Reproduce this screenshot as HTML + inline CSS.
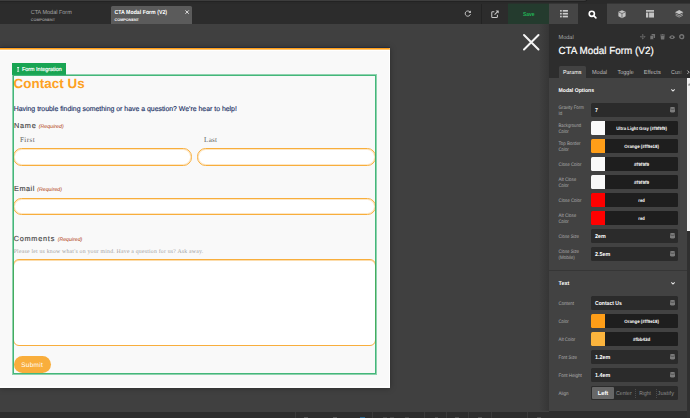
<!DOCTYPE html>
<html><head><meta charset="utf-8"><title>CTA Modal Form (V2)</title>
<style>
*{box-sizing:border-box;margin:0;padding:0}
html,body{width:690px;height:418px;overflow:hidden;background:#404040;font-family:"Liberation Sans",sans-serif}
.a{position:absolute}
.t{position:absolute;white-space:nowrap;line-height:1;transform-origin:0 0}
svg{position:absolute;overflow:visible}
#topstrip{left:0;top:0;width:690px;height:4px;background:#2a2a2a}
#topstrip i{position:absolute;left:0;top:-2px;width:587px;height:3px;background:#3d3d3d;border-radius:0 0 3px 0;box-shadow:0 0 0 .6px #1c1c1c}
#bar{left:0;top:3.5px;width:549px;height:20.5px;background:#2c2c2c}
#tabact{left:111.3px;top:6px;width:80.7px;height:18px;background:#5b5b5b;border-radius:1.5px 1.5px 0 0}
#save{left:508px;top:3.5px;width:41px;height:20.5px;background:#243b2e}
.ptab{top:3.5px;height:20.5px;width:28.7px;background:#454545}
#panel{left:549px;top:24px;width:141px;height:394px;background:#2d2d2d}
#pcont{left:549px;top:78px;width:137.5px;height:333px;background:#424242}
#shade{left:539px;top:24px;width:10px;height:387px;background:linear-gradient(to right,rgba(0,0,0,0),rgba(0,0,0,.16))}
.inp{position:absolute;left:591px;width:87px;height:14px;background:#2b2b2b;border-radius:1.5px;overflow:hidden}
.sw{position:absolute;left:0;top:0;width:14px;height:100%}
.cv{position:absolute;left:14px;right:0;top:0;height:100%;background:#1e1e1e}
.db{position:absolute;left:669.7px;width:5px;height:5.6px}
#modal{left:0;top:48px;width:390px;height:340px;background:#f9f9f9;border-top:2px solid #ff9e18;border-right:1px solid #fff;border-bottom:2px solid #fdfdfd;box-shadow:0 0 6px rgba(0,0,0,.35)}
.fld{position:absolute;left:13.4px;height:18px;background:#fff;border:1px solid #f8ae3c;box-shadow:inset 0 0 0 1px rgba(247,170,51,.28);border-radius:8.6px}
#bot{left:0;top:412px;width:549px;height:6px;background:#2d2d2d}
#bot i{position:absolute;top:0;width:1px;height:7px;background:#3b3b3b}
</style></head><body>
<div class="a" id="topstrip"><i></i></div>
<div class="a" id="bar"></div>
<div class="a" id="tabact"></div>
<svg style="left:184.5px;top:9.9px" width="4.2" height="4.2" viewBox="0 0 10 10"><path d="M1 1L9 9M9 1L1 9" stroke="#fff" stroke-width="1.9" fill="none"/></svg>
<div class="a" style="left:481px;top:3.5px;width:1px;height:20.5px;background:#232323"></div>
<svg style="left:464.4px;top:9.900px" width="7.600" height="7.600" viewBox="0 0 16 16"><path d="M12.600 4.200A5.600 5.600 0 1 0 13.600 8.600" stroke="#c9c9c9" stroke-width="1.900" fill="none"/><path d="M9.400 5.900L14.600 6.200L14.400 1z" fill="#c9c9c9"/></svg>
<svg style="left:491px;top:9.600px" width="8.200" height="8.200" viewBox="0 0 16 16"><path d="M12.500 9.500V13a1.500 1.500 0 0 1-1.500 1.500H3A1.500 1.500 0 0 1 1.500 13V5A1.500 1.500 0 0 1 3 3.500H6.500" stroke="#c9c9c9" stroke-width="2" fill="none"/><path d="M7 9L13.500 2.500" stroke="#c9c9c9" stroke-width="2" fill="none"/><path d="M9 1H15V7z" fill="#c9c9c9"/></svg>
<div class="a" id="save"></div>
<div class="a ptab" style="left:549px;width:29.200px"></div>
<div class="a ptab" style="left:606.900px;width:84px"></div>
<div class="a" style="left:508px;top:3px;width:41px;height:1px;background:#28312c"></div><div class="a" style="left:549px;top:3px;width:29px;height:1px;background:#353535"></div><div class="a" style="left:607px;top:3px;width:83px;height:1px;background:#353535"></div>
<div class="a" id="panel"></div>
<div class="a" style="left:578.200px;top:3.500px;width:28.700px;height:21px;background:#2d2d2d"></div>
<div class="a" id="shade"></div>
<div class="a" id="pcont"></div>
<svg style="left:560.200px;top:10.400px" width="8" height="7.400" viewBox="0 0 16 15"><g fill="#cdcdcd"><rect x="0" y="0" width="3.400" height="3.400"/><rect x="5.400" y="0" width="10.600" height="3.400"/><rect x="0" y="5.800" width="3.400" height="3.400"/><rect x="5.400" y="5.800" width="10.600" height="3.400"/><rect x="0" y="11.600" width="3.400" height="3.400"/><rect x="5.400" y="11.600" width="10.600" height="3.400"/></g></svg>
<svg style="left:588.300px;top:9.700px" width="9" height="9" viewBox="0 0 18 18"><circle cx="7.600" cy="7.600" r="5.200" stroke="#fff" stroke-width="3.200" fill="none"/><path d="M11.800 11.800L15.800 15.800" stroke="#fff" stroke-width="3.200" stroke-linecap="round"/></svg>
<svg style="left:617.600px;top:9.800px" width="8" height="8.400" viewBox="0 0 16 17"><path d="M8 0.500L15.300 3.600V12.600L8 16.500L0.700 12.600V3.600z" fill="#c4c4c4"/><path d="M8 7.200V16M1.200 4L8 7.200L14.800 4" stroke="#454545" stroke-width="1.300" fill="none"/></svg>
<svg style="left:646.300px;top:10.400px" width="8" height="7.600" viewBox="0 0 16 15"><g fill="#c4c4c4"><rect x="0" y="0" width="16" height="3.400"/><rect x="0" y="5" width="4.600" height="10"/><rect x="6.200" y="5" width="9.800" height="10"/></g></svg>
<svg style="left:675px;top:10px" width="8.400" height="7.600" viewBox="0 0 17 15"><path d="M8.500 0L17 4.200L8.500 8.400L0 4.200z" fill="#c4c4c4"/><path d="M1.200 7.600L8.500 11.200L15.800 7.600" stroke="#a8a8a8" stroke-width="1.800" fill="none"/><path d="M1.200 10.600L8.500 14.200L15.800 10.600" stroke="#a0a0a0" stroke-width="1.800" fill="none"/></svg>
<svg style="left:640.300px;top:34.100px" width="5.600" height="5.600" viewBox="0 0 10 10"><path d="M5 0L6.800 2.200H3.200zM5 10L3.200 7.800H6.800zM0 5L2.200 3.200V6.800zM10 5L7.800 6.800V3.200z" fill="#747474"/><path d="M5 1.500V8.500M1.500 5H8.500" stroke="#747474" stroke-width="1.100"/></svg>
<svg style="left:649.900px;top:34.200px" width="5.100" height="5.500" viewBox="0 0 10 11"><rect x="3" y="0" width="7" height="8" rx="1" fill="#747474"/><rect x="0" y="3" width="7" height="8" rx="1" fill="#747474" stroke="#2d2d2d" stroke-width="1"/></svg>
<svg style="left:660px;top:34.200px" width="5.200" height="5.500" viewBox="0 0 10 11"><rect x="0" y="1.200" width="10" height="1.600" fill="#747474"/><rect x="3.300" y="0" width="3.400" height="1.500" fill="#747474"/><path d="M1 3.600H9L8.300 11H1.700z" fill="#747474"/></svg>
<svg style="left:668.900px;top:34.700px" width="6.200" height="4.300" viewBox="0 0 12 8"><path d="M0 4Q6 -3.500 12 4Q6 11.500 0 4z" fill="#747474"/><circle cx="6" cy="4" r="1.800" fill="#2d2d2d"/></svg>
<svg style="left:679.300px;top:34.100px" width="5.400" height="5.400" viewBox="0 0 10 10"><circle cx="5" cy="5" r="3.600" fill="none" stroke="#747474" stroke-width="2.600"/></svg>
<div class="a" style="left:558.500px;top:66px;width:27.500px;height:12px;background:#424242;border-radius:1.500px 1.500px 0 0"></div>
<svg style="left:687px;top:69.700px" width="2.600" height="4.400" viewBox="0 0 5 8"><path d="M0.800 0.800L4 4L0.800 7.200" stroke="#ddd" stroke-width="1.500" fill="none"/></svg>
<div class="a" style="left:686.500px;top:78px;width:3.500px;height:340px;background:#303030"></div>
<div class="a" style="left:687px;top:78px;width:3px;height:153px;background:#f1f1f1"></div>
<svg style="left:687.600px;top:82.500px" width="2.400" height="2.400" viewBox="0 0 4 4"><path d="M0 4L2 0L4 4z" fill="#888"/></svg>
<svg style="left:670.700px;top:89.4px" width="4" height="2.600" viewBox="0 0 8 5"><path d="M0.700 0.700L4 4L7.300 0.700" stroke="#e8e8e8" stroke-width="2.100" fill="none"/></svg>
<div class="inp" style="top:103.0px"></div>
<svg class="db" style="top:107.4px" viewBox="0 0 10 11"><path d="M0 2.200C0 -0.700 10 -0.700 10 2.200V8.800C10 11.700 0 11.700 0 8.800z" fill="#7c7c7c"/><path d="M0 3.300C2 5 8 5 10 3.300" stroke="#2b2b2b" stroke-width="1" fill="none"/></svg>
<div class="inp" style="top:121.0px"><i class="sw" style="background:#f9f9f9"></i><i class="cv"></i></div>
<div class="inp" style="top:139.0px"><i class="sw" style="background:#ff9e18"></i><i class="cv"></i></div>
<div class="inp" style="top:157.0px"><i class="sw" style="background:#f9f9f9"></i><i class="cv"></i></div>
<div class="inp" style="top:175.0px"><i class="sw" style="background:#f9f9f9"></i><i class="cv"></i></div>
<div class="inp" style="top:193.0px"><i class="sw" style="background:#ff0000"></i><i class="cv"></i></div>
<div class="inp" style="top:211.0px"><i class="sw" style="background:#ff0000"></i><i class="cv"></i></div>
<div class="inp" style="top:229.0px"></div>
<svg class="db" style="top:233.4px" viewBox="0 0 10 11"><path d="M0 2.200C0 -0.700 10 -0.700 10 2.200V8.800C10 11.700 0 11.700 0 8.800z" fill="#7c7c7c"/><path d="M0 3.300C2 5 8 5 10 3.300" stroke="#2b2b2b" stroke-width="1" fill="none"/></svg>
<div class="inp" style="top:247.0px"></div>
<svg class="db" style="top:251.4px" viewBox="0 0 10 11"><path d="M0 2.200C0 -0.700 10 -0.700 10 2.200V8.800C10 11.700 0 11.700 0 8.800z" fill="#7c7c7c"/><path d="M0 3.300C2 5 8 5 10 3.300" stroke="#2b2b2b" stroke-width="1" fill="none"/></svg>
<div class="a" style="left:549px;top:270px;width:137.500px;height:1px;background:#363636"></div>
<svg style="left:670.700px;top:282.4px" width="4" height="2.600" viewBox="0 0 8 5"><path d="M0.700 0.700L4 4L7.300 0.700" stroke="#e8e8e8" stroke-width="2.100" fill="none"/></svg>
<div class="inp" style="top:296.0px"></div>
<svg class="db" style="top:300.4px" viewBox="0 0 10 11"><path d="M0 2.200C0 -0.700 10 -0.700 10 2.200V8.800C10 11.700 0 11.700 0 8.800z" fill="#7c7c7c"/><path d="M0 3.300C2 5 8 5 10 3.300" stroke="#2b2b2b" stroke-width="1" fill="none"/></svg>
<div class="inp" style="top:314.0px"><i class="sw" style="background:#ff9e18"></i><i class="cv"></i></div>
<div class="inp" style="top:332.0px"><i class="sw" style="background:#fbb43d"></i><i class="cv"></i></div>
<div class="inp" style="top:350.0px"></div>
<svg class="db" style="top:354.4px" viewBox="0 0 10 11"><path d="M0 2.200C0 -0.700 10 -0.700 10 2.200V8.800C10 11.700 0 11.700 0 8.800z" fill="#7c7c7c"/><path d="M0 3.300C2 5 8 5 10 3.300" stroke="#2b2b2b" stroke-width="1" fill="none"/></svg>
<div class="inp" style="top:368.0px"></div>
<svg class="db" style="top:372.4px" viewBox="0 0 10 11"><path d="M0 2.200C0 -0.700 10 -0.700 10 2.200V8.800C10 11.700 0 11.700 0 8.800z" fill="#7c7c7c"/><path d="M0 3.300C2 5 8 5 10 3.300" stroke="#2b2b2b" stroke-width="1" fill="none"/></svg>
<div class="inp" style="top:386.0px"></div>
<div class="a" style="left:592px;top:387.3px;width:21.900px;height:11.600px;background:#676767;border-radius:1px"></div>
<div class="a" style="left:634.8px;top:388.6px;width:0;height:9px;border-left:1px dotted #4c4c4c"></div>
<div class="a" style="left:655.5px;top:388.6px;width:0;height:9px;border-left:1px dotted #4c4c4c"></div>
<div class="a" id="bot"><i style="left:295.0px"></i><i style="left:372.4px"></i><i style="left:424.4px"></i><i style="left:446.4px"></i><i style="left:468.4px"></i><i style="left:490.5px"></i><i style="left:527.0px"></i><b style="position:absolute;left:303.5px;top:5px;width:4.0px;height:1px;opacity:.6;background:#777"></b><b style="position:absolute;left:333.0px;top:5px;width:4.0px;height:1px;opacity:.6;background:#777"></b><b style="position:absolute;left:359.8px;top:5px;width:5.0px;height:1px;opacity:.6;background:#2b8fd6"></b><b style="position:absolute;left:382.6px;top:5px;width:4.0px;height:1px;opacity:.6;background:#5c5c5c"></b><b style="position:absolute;left:389.7px;top:5px;width:4.0px;height:1px;opacity:.6;background:#5c5c5c"></b><b style="position:absolute;left:405.0px;top:5px;width:4.0px;height:1px;opacity:.6;background:#5c5c5c"></b><b style="position:absolute;left:434.5px;top:5px;width:3.0px;height:1px;opacity:.6;background:#666"></b><b style="position:absolute;left:455.0px;top:5px;width:4.0px;height:1px;opacity:.6;background:#6c6c6c"></b><b style="position:absolute;left:478.0px;top:5px;width:4.0px;height:1px;opacity:.6;background:#6c6c6c"></b><b style="position:absolute;left:537.0px;top:5px;width:4.0px;height:1px;opacity:.6;background:#666"></b></div>
<svg style="left:523px;top:34px" width="16.500" height="16.500" viewBox="0 0 16.500 16.500"><path d="M1 1L15.500 15.500M15.500 1L1 15.500" stroke="#f4f4f4" stroke-width="2" stroke-linecap="round" fill="none"/></svg>
<div class="a" id="modal"></div>
<div class="a" style="left:0;top:47px;width:390px;height:1px;background:#222c40"></div>
<div class="a" style="left:0;top:49px;width:390px;height:1px;background:#ffc673"></div>
<div class="a" style="left:0;top:50px;width:390px;height:1px;background:#fff"></div>
<div class="a" style="left:12px;top:63px;width:54px;height:12px;background:#19a553"></div>
<svg style="left:16.900px;top:67px" width="2.200" height="4.800" viewBox="0 0 4 9"><path d="M0 0H4V1.200H2.800V7.800H4V9H0V7.800H1.200V1.200H0z" fill="#fff"/></svg>
<div class="fld" style="top:148px;width:178.600px"></div>
<div class="fld" style="left:196.700px;top:148px;width:179px"></div>
<div class="fld" style="top:198px;height:17px;width:362.300px"></div>
<div class="fld" style="top:259px;width:362.300px;height:87px;border-radius:6px;box-shadow:inset 0 1px 0 rgba(247,170,51,.4)"></div>
<div class="a" style="left:12px;top:74px;width:365px;height:301px;border:1px solid rgba(36,172,100,.5)"></div>
<div class="a" style="left:13px;top:75px;width:363px;height:299px;border:1px solid rgba(36,172,100,.85)"></div>
<div class="a" style="left:14px;top:356px;width:37.100px;height:17px;border-radius:8.500px;background:#f9ae3c"></div>
<svg style="left:0;top:0" width="690" height="418" viewBox="0 0 690 418" text-rendering="geometricPrecision" font-family="'Liberation Sans',sans-serif"><text transform="translate(30.70,13.80) scale(0.930,1)" font-size="5.90" fill="#a6a6a6">CTA Modal Form</text>
<text x="30.80" y="21.00" font-size="3.74" fill="#9a9a9a" font-weight="bold">COMPONENT</text>
<text transform="translate(114.50,13.80) scale(0.888,1)" font-size="5.90" fill="#fff" font-weight="bold">CTA Modal Form (V2)</text>
<text x="114.60" y="21.00" font-size="3.74" fill="#fff" font-weight="bold">COMPONENT</text>
<text transform="translate(522.90,15.70) scale(0.872,1)" font-size="5.70" fill="#22b356" font-weight="bold">Save</text>
<text transform="translate(558.50,39.00) scale(0.962,1)" font-size="5.80" fill="#a8a8a8">Modal</text>
<text transform="translate(558.40,54.30) scale(0.959,1)" font-size="10.30" fill="#fff" stroke="#fff" stroke-width=".2">CTA Modal Form (V2)</text>
<text transform="translate(563.00,74.00) scale(0.926,1)" font-size="5.80" fill="#fff">Params</text>
<text transform="translate(592.00,74.00) scale(0.950,1)" font-size="5.80" fill="#bcbcbc">Modal</text>
<text transform="translate(617.50,74.00) scale(0.948,1)" font-size="5.80" fill="#bcbcbc">Toggle</text>
<text transform="translate(643.70,74.00) scale(0.965,1)" font-size="5.80" fill="#bcbcbc">Effects</text>
<text transform="translate(671.10,74.00) scale(0.939,1)" font-size="5.80" fill="#bcbcbc">Cust</text>
<defs><linearGradient id="fd"><stop offset="0" stop-color="#2d2d2d" stop-opacity="0"/><stop offset=".75" stop-color="#2d2d2d"/></linearGradient></defs><rect x="677" y="66" width="9" height="11" fill="url(#fd)"/>
<text transform="translate(558.50,92.30) scale(0.929,1)" font-size="5.50" fill="#fff" font-weight="bold">Modal Options</text>
<text transform="translate(558.50,109.15) scale(0.879,1)" font-size="5.00" fill="#acacac">Gravity Form</text>
<text transform="translate(558.50,115.25) scale(0.899,1)" font-size="5.00" fill="#acacac">Id</text>
<text transform="translate(595.10,112.30) scale(0.914,1)" font-size="5.70" fill="#fff" font-weight="bold">7</text>
<text transform="translate(558.50,127.15) scale(0.847,1)" font-size="5.00" fill="#acacac">Background</text>
<text transform="translate(558.50,133.25) scale(0.862,1)" font-size="5.00" fill="#acacac">Color</text>
<text transform="translate(616.25,130.00) scale(0.922,1)" font-size="4.70" fill="#fff" font-weight="bold">Ultra Light Gray (#f9f9f9)</text>
<text transform="translate(558.50,145.15) scale(0.895,1)" font-size="5.00" fill="#acacac">Top Border</text>
<text transform="translate(558.50,151.25) scale(0.862,1)" font-size="5.00" fill="#acacac">Color</text>
<text transform="translate(624.25,148.00) scale(0.938,1)" font-size="4.70" fill="#fff" font-weight="bold">Orange (#ff9e18)</text>
<text transform="translate(558.50,166.20) scale(0.877,1)" font-size="5.00" fill="#acacac">Close Color</text>
<text x="634.00" y="166.00" font-size="4.70" fill="#fff" font-weight="bold" letter-spacing="0.012">#f9f9f9</text>
<text transform="translate(558.50,181.15) scale(0.889,1)" font-size="5.00" fill="#acacac">Alt Close</text>
<text transform="translate(558.50,187.25) scale(0.862,1)" font-size="5.00" fill="#acacac">Color</text>
<text x="634.00" y="184.00" font-size="4.70" fill="#fff" font-weight="bold" letter-spacing="0.012">#f9f9f9</text>
<text transform="translate(558.50,202.20) scale(0.877,1)" font-size="5.00" fill="#acacac">Close Color</text>
<text transform="translate(638.35,202.00) scale(0.891,1)" font-size="4.70" fill="#fff" font-weight="bold">red</text>
<text transform="translate(558.50,217.15) scale(0.889,1)" font-size="5.00" fill="#acacac">Alt Close</text>
<text transform="translate(558.50,223.25) scale(0.862,1)" font-size="5.00" fill="#acacac">Color</text>
<text transform="translate(638.35,220.00) scale(0.891,1)" font-size="4.70" fill="#fff" font-weight="bold">red</text>
<text transform="translate(558.50,238.20) scale(0.858,1)" font-size="5.00" fill="#acacac">Close Size</text>
<text transform="translate(595.10,238.30) scale(0.944,1)" font-size="5.70" fill="#fff" font-weight="bold">2em</text>
<text transform="translate(558.50,253.15) scale(0.858,1)" font-size="5.00" fill="#acacac">Close Size</text>
<text transform="translate(558.50,259.25) scale(0.897,1)" font-size="5.00" fill="#acacac">(Mobile)</text>
<text transform="translate(595.10,256.30) scale(0.942,1)" font-size="5.70" fill="#fff" font-weight="bold">2.5em</text>
<text transform="translate(558.50,285.40) scale(0.986,1)" font-size="5.50" fill="#fff" font-weight="bold">Text</text>
<text transform="translate(558.50,305.20) scale(0.879,1)" font-size="5.00" fill="#acacac">Content</text>
<text transform="translate(595.10,305.30) scale(0.886,1)" font-size="5.70" fill="#fff" font-weight="bold">Contact Us</text>
<text transform="translate(558.50,323.20) scale(0.862,1)" font-size="5.00" fill="#acacac">Color</text>
<text transform="translate(624.25,323.00) scale(0.938,1)" font-size="4.70" fill="#fff" font-weight="bold">Orange (#ff9e18)</text>
<text transform="translate(558.50,341.20) scale(0.876,1)" font-size="5.00" fill="#acacac">Alt Color</text>
<text transform="translate(633.00,341.00) scale(0.956,1)" font-size="4.70" fill="#fff" font-weight="bold">#fbb43d</text>
<text transform="translate(558.50,359.20) scale(0.876,1)" font-size="5.00" fill="#acacac">Font Size</text>
<text transform="translate(595.10,359.30) scale(0.942,1)" font-size="5.70" fill="#fff" font-weight="bold">1.2em</text>
<text transform="translate(558.50,377.20) scale(0.901,1)" font-size="5.00" fill="#acacac">Font Height</text>
<text transform="translate(595.10,377.30) scale(0.942,1)" font-size="5.70" fill="#fff" font-weight="bold">1.4em</text>
<text transform="translate(558.50,395.20) scale(0.908,1)" font-size="5.00" fill="#acacac">Align</text>
<text transform="translate(597.75,395.20) scale(0.987,1)" font-size="5.80" fill="#fff" font-weight="bold">Left</text>
<text transform="translate(615.90,395.20) scale(0.925,1)" font-size="5.70" fill="#8c8c8c">Center</text>
<text transform="translate(639.20,395.20) scale(0.873,1)" font-size="5.70" fill="#8c8c8c">Right</text>
<text x="657.50" y="395.20" font-size="5.70" fill="#8c8c8c" letter-spacing="0.079">Justify</text>
<text transform="translate(21.90,71.20) scale(0.956,1)" font-size="5.70" fill="#fff" stroke="#fff" stroke-width=".18">Form Integration</text>
<text x="13.60" y="87.75" font-size="13.40" fill="#fda123" font-weight="bold" letter-spacing="0.035">Contact Us</text>
<text transform="translate(13.70,111.00) scale(0.987,1)" font-size="7.00" fill="#1f3468" stroke="#1f3468" stroke-width=".16">Having trouble finding something or have a question? We&#39;re hear to help!</text>
<text x="14.00" y="127.65" font-size="7.30" fill="#454545" letter-spacing="0.744" stroke="#454545" stroke-width=".14">Name</text>
<text x="38.80" y="127.65" font-size="5.17" fill="#ad3407" font-style="italic" letter-spacing="0.060">(Required)</text>
<text x="19.90" y="141.60" font-size="7.10" fill="#606060" font-family="'Liberation Serif',serif" letter-spacing="0.446">First</text>
<text x="204.00" y="141.60" font-size="7.10" fill="#606060" font-family="'Liberation Serif',serif" letter-spacing="0.294">Last</text>
<text x="14.00" y="191.40" font-size="7.30" fill="#454545" letter-spacing="0.537" stroke="#454545" stroke-width=".14">Email</text>
<text x="37.20" y="191.40" font-size="5.14" fill="#ad3407" font-style="italic" letter-spacing="0.065">(Required)</text>
<text x="13.70" y="240.90" font-size="7.30" fill="#454545" letter-spacing="0.760" stroke="#454545" stroke-width=".14">Comments</text>
<text x="57.75" y="240.90" font-size="5.08" fill="#ad3407" font-style="italic" letter-spacing="0.056">(Required)</text>
<text x="13.70" y="253.30" font-size="5.80" fill="#a3a3a3" font-family="'Liberation Serif',serif" letter-spacing="0.208">Please let us know what&#39;s on your mind. Have a question for us? Ask away.</text>
<text x="21.20" y="367.20" font-size="6.49" fill="#fff" letter-spacing="0.263">Submit</text></svg>
</body></html>
